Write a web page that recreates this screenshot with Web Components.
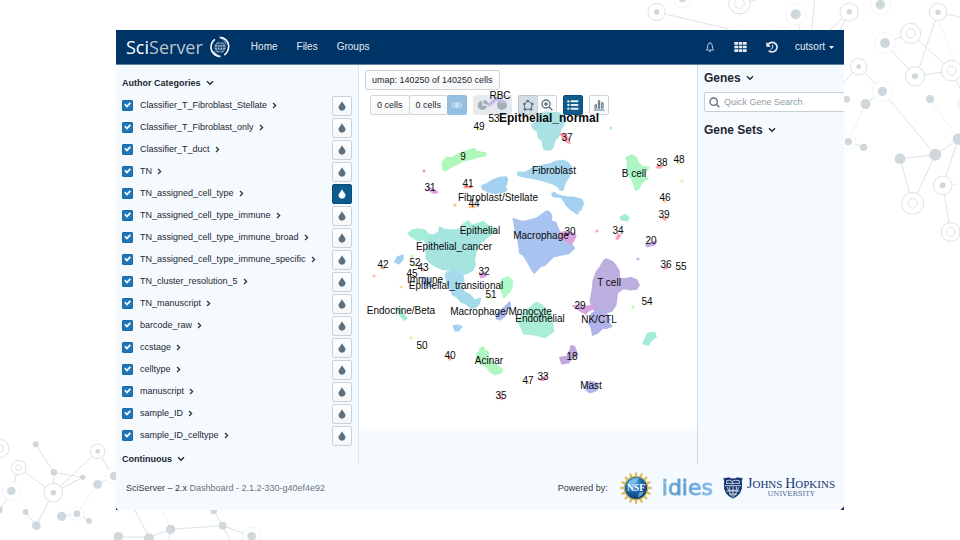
<!DOCTYPE html>
<html lang="en">
<head>
<meta charset="utf-8">
<meta name="viewport" content="width=device-width, initial-scale=1">
<title>SciServer Dashboard</title>
<style>
html, body { margin: 0; min-height: 100%; }
body { background: #fff; font-family: "Liberation Sans", Arial, sans-serif; font-size: 9px; line-height: 12px; color: #1c2733; }
</style>
</head>
<body>
<sci-slide>
  <sci-app>
    <sci-header slot="header"></sci-header>
    <category-panel slot="left"></category-panel>
    <umap-view slot="center"></umap-view>
    <gene-panel slot="right"></gene-panel>
    <sci-footer slot="footer"></sci-footer>
  </sci-app>
</sci-slide>
<script>
const define = (name, html, setup) => {
  const t = document.createElement('template');
  t.innerHTML = html;
  customElements.define(name, class extends HTMLElement {
    constructor() { super(); this.attachShadow({ mode: 'open' }).append(t.content.cloneNode(true)); }
    connectedCallback() { if (setup) setup(this, this.shadowRoot); }
  });
};

/* Decorative network drawing: c = dot, o = ring, d = dotted ring, l = line, s = dotted line */
const net = items => items.map(([k, a, b, c, d]) =>
  k === 'c' ? `<circle cx="${a}" cy="${b}" r="${c}" fill="#cfd8dc"/>` :
  k === 'o' ? `<circle cx="${a}" cy="${b}" r="${c}" fill="#fff" stroke="#dbe2e5" stroke-width="3"/>` :
  k === 'd' ? `<circle cx="${a}" cy="${b}" r="${c}" fill="#fff" stroke="#d6dee1" stroke-width="2" stroke-dasharray="3 3"/>` :
  `<path d="M${a} ${b}L${c} ${d}" stroke="#dce3e6" stroke-width="3"${k === 's' ? ' stroke-dasharray="3 4"' : ''}/>`).join('');
const topNet = net([
  ['l',80,36,300,88],['l',328,12,375,0],['l',554,0,545,90],['l',497,43,510,90],['l',657,36,600,90],['l',657,36,630,90],
  ['l',765,129,842,100],['l',765,129,855,229],['l',842,100,965,212],['l',924,36,868,202],['l',924,36,990,52],['s',924,60,975,185],
  ['l',855,229,965,212],['l',965,212,990,265],['l',686,200,640,248],['l',686,200,757,274],['l',757,274,707,312],['s',707,312,655,425],['l',655,425,701,442],
  ['l',757,274,916,464],['s',900,297,985,417],['l',985,417,916,464],['l',810,476,916,464],['l',810,476,848,610],['l',916,464,848,610],
  ['l',985,417,938,556],['l',938,556,962,696],['s',965,556,990,552],
  ['o',80,36,26],['c',80,36,8],['d',157,-4,26],['c',157,-4,11],['o',328,10,32],['o',328,10,15],['d',497,43,31],['c',497,43,15],['d',305,112,30],['d',452,110,30],
  ['o',657,36,27],['c',658,35,8],['d',751,14,30],['c',751,14,14],['o',924,36,26],['c',924,37,8],['d',765,129,31],['c',765,129,15],
  ['o',842,100,30],['o',842,100,14],['o',855,229,29],['c',855,229,9],['o',965,212,31],['o',965,212,14],['o',686,200,25],['c',686,200,7],
  ['d',757,274,30],['c',757,274,14],['c',707,312,15],['c',650,298,10],['d',655,425,23],['c',655,425,11],['c',701,442,11],['c',900,297,12],
  ['c',985,417,17],['c',810,476,16],['c',916,464,18],['o',938,556,28],['c',938,556,9],['o',848,610,33],['o',848,610,14],['o',962,696,28],['o',962,696,13],['o',1004,312,20]]);
const lowNet = net([
  ['l',107,73,162,157],['l',162,157,248,172],['l',162,157,160,218],['l',56,143,160,218],['l',56,143,34,213],['l',34,213,0,268],['l',248,172,160,218],
  ['l',293,94,160,218],['l',293,94,340,168],['l',340,168,293,193],['s',293,193,231,281],['l',185,289,231,281],['l',231,281,267,303],['l',160,218,109,317],['l',77,276,109,317],
  ['l',404,270,447,350],['s',487,270,512,328],['l',512,328,447,352],['l',512,328,505,370],['l',355,350,447,352],['l',512,328,668,317],['l',641,272,668,317],['l',668,317,695,370],['l',668,317,755,349],
  ['o',0,86,27],['o',0,86,11],['c',107,73,9],['c',162,157,10],['c',248,172,8],['o',56,143,22],['o',56,143,9],['d',34,213,27],['c',34,213,13],['c',-2,269,10],
  ['o',160,218,28],['c',160,218,8],['o',293,94,22],['c',293,94,7],['d',342,168,26],['c',342,168,13],['c',293,193,13],['d',231,281,20],['c',231,281,10],
  ['c',185,289,14],['c',267,303,9],['c',77,276,9],['c',109,317,13],['c',355,350,14],['c',447,355,15],['c',512,328,14],['c',641,272,10],['c',668,317,12],['d',755,349,27],['c',755,349,13]]);

define('sci-slide', `<style>
:host { display: block; position: relative; overflow: hidden; box-sizing: border-box; min-height: 100vh; padding: 30px 116px; }
svg { position: absolute; z-index: 0; }
.top { top: 0; right: 0; } .low { bottom: 0; left: 0; }
</style>
<svg class="top" width="330" height="250" viewBox="0 0 990 750" fill="none" aria-hidden="true">${topNet}</svg>
<svg class="low" width="265" height="120" viewBox="0 0 795 360" fill="none" aria-hidden="true">${lowNet}</svg>
<slot></slot>`);

define('sci-app', `<style>
:host { display: grid; position: relative; z-index: 1; min-height: calc(100vh - 60px); grid-template: auto 1fr auto / 243px minmax(0, 1fr) 147px; background: #f5faff; overflow: hidden; }
.wide { grid-column: 1 / -1; }
.side { display: grid; }
.l { border-right: 1px solid #d9e6f0; } .r { border-left: 1px solid #c9dbe8; }
::slotted(*) { min-width: 0; }
</style>
<div class="wide"><slot name="header"></slot></div>
<div class="side l"><slot name="left"></slot></div>
<div><slot name="center"></slot></div>
<div class="side r"><slot name="right"></slot></div>
<div class="wide"><slot name="footer"></slot></div>`);

define('sci-header', `<style>
:host { display: block; }
header { display: flex; align-items: center; height: 34px; padding: 0 10px; background: #003366; border-bottom: 1px solid #5d83a6; color: #e4ebf2; font-size: 10px; }
a { color: inherit; text-decoration: none; }
.logo { display: flex; align-items: center; gap: 6px; font: 18px/24px "Open Sans", "Noto Sans", sans-serif; color: #bcc4cd; }
.logo b { font-weight: 400; color: #fff; }
nav { display: flex; gap: 19px; margin-left: 20px; }
.tools { display: flex; align-items: center; gap: 17px; margin-left: auto; }
button { font: inherit; color: inherit; background: none; border: 0; padding: 0; display: flex; align-items: center; gap: 4px; }
svg { display: block; }
</style>
<header>
<a class="logo" href="#"><span><b>Sci</b>Server</span>
<svg width="22" height="22" viewBox="0 0 66 66" fill="none" aria-hidden="true"><circle cx="33" cy="34" r="17" fill="#8fa8bf"/><path d="M16 34h34M33 17v34M19 25h28M19 43h28M33 17q-17 17 0 34M33 17q17 17 0 34" stroke="#003366" stroke-width="2"/><path d="M32 4Q56 6 59 29Q60 46 46 57" stroke="#fff" stroke-width="5"/><path d="M32 4Q48 11 52 25" stroke="#9fb3c6" stroke-width="3"/><path d="M18 10Q5 19 6 37Q10 58 34 62" stroke="#fff" stroke-width="5"/><path d="M14 45Q19 55 34 62" stroke="#c5d2de" stroke-width="3"/></svg></a>
<nav><a href="#">Home</a><a href="#">Files</a><a href="#">Groups</a></nav>
<div class="tools">
<button aria-label="Notifications"><svg width="10" height="12" viewBox="0 0 30 36" fill="none" stroke="#d5dfe8" stroke-width="2.6"><path d="M15 3v3M4 27Q9 23 8 15Q9 6 15 6T22 15Q21 23 26 27ZM12 30q3 4 6 0"/></svg></button>
<button aria-label="Applications"><svg width="17" height="12" viewBox="0 0 51 36" fill="#e4ebf2"><path d="M7 3h11v8H7zM20 3h11v8H20zM33 3h11v8H33zM7 14h11v8H7zM20 14h11v8H20zM33 14h11v8H33zM7 25h11v8H7zM20 25h11v8H20zM33 25h11v8H33z"/></svg></button>
<button aria-label="History"><svg width="12" height="12" viewBox="0 0 36 36" fill="none" stroke="#e4ebf2" stroke-width="5"><path d="M6 10Q14 2 24 5Q34 9 33 20Q31 32 19 33Q12 33 8 29"/><path d="M1 3v14h14z" fill="#e4ebf2" stroke="none"/><path d="M20 11v10l-6 4" stroke-width="3"/></svg></button>
<button>cutsort<svg width="5" height="3" viewBox="0 0 5 3"><path d="M0 0h5L2.5 3z" fill="#e4ebf2"/></svg></button>
</div></header>`);

const chevR = '<svg width="5" height="7" viewBox="0 0 15 21" fill="none" stroke="#26323d" stroke-width="3.6" aria-hidden="true"><path d="M3 3l8 7.5L3 18"/></svg>';
const chevD = '<svg width="8" height="6" viewBox="0 0 24 18" fill="none" stroke="#1c2733" stroke-width="4" aria-hidden="true"><path d="M3 4l9 9 9-9"/></svg>';

define('section-title', `<style>
:host { display: block; }
button { display: flex; align-items: center; gap: 5px; width: 100%; padding: 0; border: 0; background: none; font: inherit; font-weight: 700; color: #1c2733; text-align: left; }
</style><button aria-expanded="true"><span><slot></slot></span>${chevD}</button>`);

define('category-row', `<style>
:host { display: flex; align-items: center; height: 22px; }
label { display: flex; align-items: center; gap: 7px; }
input { appearance: none; width: 11px; height: 11px; margin: 0; border-radius: 2px; background: #1f77b8; box-shadow: inset 0 0 0 1px #1a69a4; display: grid; }
input:checked::before { content: ""; background: #fff; clip-path: polygon(20% 48%, 32% 38%, 44% 53%, 70% 26%, 82% 37%, 45% 74%); }
button { display: grid; place-items: center; padding: 0; border: 0; background: none; }
.open { width: 5px; height: 12px; margin-left: 5px; }
.tint { width: 20px; height: 20px; margin-left: auto; margin-top: 2px; border-radius: 2px; background: linear-gradient(#fff, #f4f6f8); border: 1px solid #c9d3da; color: #5c7080; }
:host([active]) .tint { background: #0e5a8a; border-color: #0b4d78; color: #fff; }
</style>
<label><input type="checkbox" checked><slot></slot></label>
<button class="open" aria-label="Expand">${chevR}</button>
<button class="tint" aria-label="Color by category"><svg width="8" height="10" viewBox="0 0 24 30"><path d="M12 1Q15 7 20 13Q24 17 22 22Q20 29 12 29T2 22Q0 17 4 13Q9 7 12 1Z" fill="currentColor"/></svg></button>`);

define('category-panel', `<style>
:host { display: block; padding: 12px 6px 0; }
.list { padding-top: 5px; }
.end { padding-top: 7px; }
</style>
<section-title>Author Categories</section-title><div class="list"></div><section-title class="end">Continuous</section-title>`,
(host, root) => {
  const list = root.querySelector('.list');
  if (list.childElementCount) return;
  for (const n of ['Classifier_T_Fibroblast_Stellate', 'Classifier_T_Fibroblast_only', 'Classifier_T_duct', 'TN', 'TN_assigned_cell_type', 'TN_assigned_cell_type_immune', 'TN_assigned_cell_type_immune_broad', 'TN_assigned_cell_type_immune_specific', 'TN_cluster_resolution_5', 'TN_manuscript', 'barcode_raw', 'ccstage', 'celltype', 'manuscript', 'sample_ID', 'sample_ID_celltype']) {
    const r = document.createElement('category-row');
    r.textContent = n;
    if (n === 'TN_assigned_cell_type') r.setAttribute('active', '');
    list.append(r);
  }
});

define('gene-panel', `<style>
:host { display: block; padding: 5px 0 0 6px; overflow: hidden; }
section-title { font-size: 12px; line-height: 16px; }
.search { display: flex; align-items: center; gap: 4px; height: 18px; margin: 6px -8px 10px 0; padding-left: 4px; background: #fff; border: 1px solid #c6d2da; border-radius: 2px; }
svg { flex: none; }
input { flex: 1; min-width: 0; border: 0; padding: 0; background: none; font: inherit; outline: 0; }
input::placeholder { color: #8f9ca7; opacity: 1; }
</style>
<section-title>Genes</section-title>
<div class="search"><svg width="11" height="11" viewBox="0 0 33 33" fill="none" stroke="#5c7080" stroke-width="4" aria-hidden="true"><circle cx="14" cy="14" r="11"/><path d="M22 22l9 9"/></svg><input type="search" aria-label="Quick Gene Search" placeholder="Quick Gene Search"></div>
<section-title>Gene Sets</section-title>`);

/* Each cluster group: origin in plot units, then [fill, outline points] at three points per unit */
const clusters = [
 [355,60,[
  ['#c6bdea','398 134 425 112 440 120 452 128 440 127 425 121 402 138'],
  ['#b0f7ba','262 308 268 300 275 292 290 294 300 288 310 282 330 275 350 268 358 266 364 274 392 280 392 287 369 291 350 297 325 302 312 310 290 320 272 332 264 329'],
  ['#dea0dc','220 383 235 388 248 397 236 399 222 390'],['#ff9f86','328 378 350 380 348 383 328 382'],['#ffc285','343 440 360 438 360 442 344 442'],
  ['#a4d0f1','380 378 395 372 410 362 432 353 454 351 457 358 455 368 450 382 455 388 450 394 420 400 400 395 384 388']]],
 [525,60,[
  ['#a6d5ee','-22 337 0 338 20 326 45 318 75 312 95 304 115 302 128 308 138 320 138 335 132 350 124 362 118 375 113 390 106 390 100 380 85 372 60 364 40 358 10 352 -8 350 -20 346'],
  ['#a8e2e4','20 194 33 188 42 168 60 157 105 160 120 172 118 190 108 206 100 230 90 240 84 262 75 269 58 268 54 258 52 242 40 232 38 215 24 204'],
  ['#ff9fb6','106 222 118 222 130 235 135 250 120 243'],
  ['#adf6c4','303 293 320 285 332 292 340 308 352 320 372 322 366 330 355 342 368 356 357 361 348 372 342 385 332 391 328 375 322 360 312 345 306 325 308 305'],
  ['#ff9fa6','395 322 402 318 413 319 405 324'],
  ['#a4d0f1','81 401 88 398 94 404 110 408 125 411 145 412 170 419 175 430 167 450 159 454 158 461 149 456 137 448 124 435 114 418 106 411 90 410 83 408']]],
 [355,205,[
  ['#a6edd8','160 86 170 77 190 72 210 76 218 86 235 92 252 88 330 70 322 60 340 48 350 62 365 57 385 50 400 64 418 70 423 80 400 93 385 108 340 120 250 120 215 115 205 103 188 106 172 96'],
  ['#a6e5df','254 67 270 74 300 76 320 72 345 80 370 78 388 95 372 118 363 140 358 165 360 180 353 195 340 203 320 210 300 203 280 193 262 193 240 183 225 173 214 160 214 140 217 115 225 95 252 82'],
  ['#a5daec','275 202 300 197 323 212 326 225 318 240 328 262 345 270 360 287 376 280 373 295 363 305 350 310 335 298 318 290 308 278 292 268 287 250 277 235 272 215'],
  ['#a2cef1','120 170 128 156 144 151 143 164 131 176'],['#a9bff0','205 218 225 222 222 236 238 243 215 246 205 232'],
  ['#dca2da','374 207 390 202 393 213 378 218'],['#b0f7c6','441 223 460 216 472 230 470 246 465 260 454 269 447 278 442 263 434 245'],
  ['#a4ecd4','122 307 135 313 155 340 148 345 134 329'],['#adbcee','464 291 466 301 455 316 449 334 435 344 425 341 428 325 444 311'],
  ['#a4d0f1','295 363 308 361 320 365 311 377 301 377']]],
 [525,205,[
  ['#a9c3f1','-35 41 -15 48 0 50 15 45 35 40 55 25 62 20 72 20 80 32 78 49 92 53 98 69 108 86 122 106 142 121 148 130 131 145 108 150 85 155 75 165 60 180 45 185 28 204 18 190 5 165 -5 150 -15 145 -20 110 -28 80'],
  ['#d9a4dc','102 85 120 80 150 86 152 95 139 118 125 109 106 98'],['#ff9fc8','280 87 286 92 279 102 274 102'],['#a4edda','286 37 300 29 312 38 307 47 289 44'],
  ['#ffa49c','410 37 425 40 420 45'],['#c3a7e2','363 118 394 109 389 119 366 124'],['#ff9fb6','417 190 428 184 425 191'],
  ['#bcafe0','244 162 262 170 272 181 282 198 283 220 300 222 318 218 335 225 342 240 335 252 318 254 295 250 277 263 275 280 272 300 260 318 240 325 214 325 205 310 196 290 203 250 205 227 215 200 226 185 236 168'],
  ['#d5a3de','144 303 165 300 175 305 204 302 204 311 190 318 182 326 165 317'],
  ['#b1b2e9','200 327 210 320 240 320 254 344 248 350 260 364 245 370 235 368 216 385 203 390 200 370 192 355'],
  ['#aaeed6','34 292 50 300 61 315 76 325 82 345 85 379 60 397 30 389 -3 386 -10 370 -20 350 -10 330 10 312 20 305']]],
 [355,320,[
  ['#ffa196','280 110 290 112 285 120'],['#b0f7c0','366 100 374 95 376 84 384 81 389 91 400 96 399 110 411 125 430 140 443 149 438 158 420 163 405 155 395 140 378 132 364 122'],
  ['#bfa8de','615 113 635 110 646 90 648 78 658 80 668 105 651 115 640 128 621 131'],['#ee9fca','557 180 576 164 571 175 565 181'],
  ['#b0b7f0','690 200 705 185 728 191 725 211 705 218 695 211'],['#ff9fbf','432 222 443 238 438 238'],['#a4edda','878 41 899 38 903 50 885 66 880 75 864 71 870 58']]]
];
const dots = [[424,171,'#dda0dd'],[455,205,'#ffc080'],[479,129,'#dcf79a'],[494,121,'#b8f79a'],[611,128,'#a8f2c8'],[679,163,'#dcf79a'],[682,181,'#dff09a'],[665,201,'#ffd080'],
 [374,276,'#ffc0a0'],[383,268,'#ffb090'],[401,287,'#ffd890'],[412,256,'#c8f79a'],[414,265,'#c8f79a'],[423,270,'#ffb090'],[412,276,'#ffd090'],[491,297,'#c8f79a'],
 [597,231,'#ff9fc8'],[638,259,'#cdb0e6'],[633,307,'#baff9f'],[647,304,'#baff9f'],[680,269,'#a9f7a9'],[411,338,'#dcf79a'],[422,348,'#e5f79a'],[528,383,'#f5e58a']];
const labels = [['RBC',500,95],['53',494,118],['49',479,126],['37',567,137],['9',463,156],['Fibroblast',554,170],['B cell',634,173],['38',662,162],['48',679,159],['31',430,187],['41',468,183],
 ['Fibroblast/Stellate',498,197],['44',474,203],['46',665,197],['39',664,214],['Epithelial',480,230],['Epithelial_cancer',454,246],['Macrophage',541,235],['30',570,231],['34',618,230],['20',651,240],
 ['42',383,264],['52',415,262],['43',423,267],['45',412,273],['Immune',425,279],['32',484,271],['Epithelial_transitional',456,285],['51',491,294],['T cell',609,282],['36',666,264],['55',681,266],['54',647,301],
 ['Endocrine/Beta',401,310],['Macrophage/Monocyte',501,311],['Endothelial',540,318],['29',580,305],['NK/CTL',599,319],['50',422,345],['40',450,355],['Acinar',489,360],['18',572,356],['47',528,380],['33',543,376],['35',501,395],['Mast',591,385]];
const plot = clusters.map(([x, y, s]) => `<g transform="translate(${x} ${y}) scale(.3333)">${s.map(([f, p]) => `<polygon points="${p}" fill="${f}" stroke="${f}"/>`).join('')}</g>`).join('')
 + dots.map(([x, y, f]) => `<circle cx="${x}" cy="${y}" r="1.6" fill="${f}"/>`).join('')
 + labels.map(([t, x, y]) => `<text x="${x}" y="${y + 4}">${t}</text>`).join('')
 + '<text class="main" x="549" y="122">Epithelial_normal</text>';

define('umap-view', `<style>
:host { display: grid; background: #fff; }
:host > * { grid-area: 1 / 1; }
.plot { display: block; width: 100%; height: auto; pointer-events: none; z-index: 1; grid-area: 1 / 1; }
polygon { stroke-width: 5; stroke-linejoin: round; }
text { font: 10px "Liberation Sans", Arial, sans-serif; text-anchor: middle; fill: #080808; }
.main { font-size: 12px; font-weight: 700; }
.bar { grid-area: 1 / 1; display: flex; flex-direction: column; align-items: flex-start; gap: 5px; padding: 5px 6px; }
.row { display: flex; gap: 6px; padding-left: 5px; }
.group { display: flex; }
button { height: 20px; min-width: 20px; padding: 0 6px; border: 1px solid #ced6dc; border-radius: 2px; background: linear-gradient(#fff, #f6f8f9); font: inherit; color: #1c2733; display: grid; place-items: center; }
.group button + button { margin-left: -1px; }
.icon { padding: 0; color: #5c7080; }
.blue { background: #94bfe1; border-color: #94bfe1; color: #d8eaf7; }
.off { background: #e6eaee; border-color: #e6eaee; color: #a3afb9; }
.on { background: #d5dde4; border-color: #b9c5ce; }
.dark { background: #0e5a8a; border-color: #0b4d78; color: #e6f0f6; }
</style>
<div class="bar">
<button>umap: 140250 of 140250 cells</button>
<div class="row">
<div class="group"><button>0 cells</button><button>0 cells</button><button class="icon blue" aria-label="Differential expression"><svg width="12" height="10" viewBox="0 0 36 30" fill="none" stroke="currentColor" stroke-width="3"><path d="M9 6Q0 15 9 24M27 6q9 9 0 18M16 7q-8 8 0 16zM20 7q8 8 0 16z"/></svg></button></div>
<div class="group"><button class="icon off" aria-label="Subset"><svg width="12" height="12" viewBox="0 0 36 36" fill="currentColor"><path d="M16 5v15h14A14 14 0 1 1 16 5ZM20 2Q33 3 34 16H20Z"/></svg></button><button class="icon off" aria-label="Undo subset"><svg width="12" height="12" viewBox="0 0 36 36" fill="currentColor"><circle cx="18" cy="18" r="15"/></svg></button></div>
<div class="group"><button class="icon on" aria-label="Lasso"><svg width="12" height="12" viewBox="0 0 36 36" fill="none" stroke="currentColor" stroke-width="3"><path d="M17 6L31 15L27 31H9L7 16Z"/><g fill="currentColor" stroke="none"><circle cx="17" cy="6" r="4"/><circle cx="31" cy="15" r="4"/><circle cx="27" cy="31" r="4"/><circle cx="9" cy="31" r="4"/><circle cx="7" cy="15" r="4"/></g></svg></button><button class="icon" aria-label="Zoom"><svg width="12" height="12" viewBox="0 0 36 36" fill="none" stroke="currentColor" stroke-width="4"><circle cx="15" cy="15" r="12"/><path d="M24 24l10 10M15 9v12M9 15h12"/></svg></button></div>
<button class="icon dark" aria-label="Show labels"><svg width="12" height="12" viewBox="0 0 36 36" fill="currentColor"><path d="M11 4h23v6H11zM11 15h23v6H11zM11 26h23v6H11z"/><circle cx="4" cy="7" r="3.5"/><circle cx="4" cy="18" r="3.5"/><circle cx="4" cy="29" r="3.5"/></svg></button>
<button class="icon" aria-label="Histogram"><svg width="12" height="12" viewBox="0 0 36 36" fill="none" stroke="currentColor" stroke-width="3"><path d="M2 33h32M6 17h4v11H6zM16 5h4v23h-4zM26 11h4v17h-4z"/></svg></button>
</div></div>
<svg class="plot" viewBox="359 65 338 366" role="img" aria-label="UMAP of cell types">${plot}</svg>`);

define('sci-footer', `<style>
:host { display: block; }
footer { display: flex; align-items: center; justify-content: space-between; gap: 10px; height: 45px; padding: 0 9px 0 10px; color: #6b747c; background: linear-gradient(45deg, #3a1468 1px, transparent 2px), linear-gradient(-45deg, #3a1468 2px, transparent 3px); }
footer b { font-weight: 400; color: #333b42; }
.by { display: flex; align-items: center; gap: 12px; color: #333b42; }
.logos { display: flex; align-items: center; gap: 10px; }
a { display: flex; align-items: center; text-decoration: none; }
svg { display: block; }
.jhu { gap: 4px; font-family: "Liberation Serif", serif; color: #16356f; }
.mark { display: flex; flex-direction: column; align-items: center; }
.mark .n { font-size: 11px; line-height: 12px; white-space: nowrap; }
.mark i { font-style: normal; font-size: 14px; }
.mark .u { font: 7px/8px "DejaVu Serif", serif; color: #51698f; }
.idies { font: 22px/24px "DejaVu Sans", sans-serif; }
.idies span { background: linear-gradient(90deg, #7fb2d6, #5f9fcc 35%, #8bbcf0); -webkit-background-clip: text; background-clip: text; color: transparent; -webkit-text-stroke: 1px transparent; }
</style>
<footer><span><b>SciServer – 2.x</b> Dashboard - 2.1.2-330-g40ef4e92</span>
<div class="by">Powered by:
<div class="logos">
<a href="#" aria-label="National Science Foundation"><svg width="32" height="32" viewBox="0 0 96 96">
<defs><radialGradient id="g" cx=".4" cy=".3" r=".8"><stop offset="0" stop-color="#65b6ed"/><stop offset=".5" stop-color="#1765ac"/><stop offset="1" stop-color="#072f60"/></radialGradient></defs>
<g id="s" stroke="#d5ac3f" stroke-width="5" fill="#d5ac3f"></g>
<circle cx="48" cy="48" r="37" fill="#d8b247"/><circle cx="48" cy="48" r="33" fill="url(#g)"/>
<path d="M24 32q15-18 34-13l-9 12-13 3-4 10zM57 62l14-4q-3 15-17 18z" fill="#a0d7ef" opacity=".6"/>
<text x="48" y="58" text-anchor="middle" font-family="Liberation Serif, serif" font-weight="700" font-size="29" fill="#fff">NSF</text></svg></a>
<a class="idies" href="#"><span>idies</span></a>
<a class="jhu" href="#"><svg width="20" height="22" viewBox="0 0 60 66"><path d="M1 2Q9 5 16 1Q30 8 44 1Q51 5 59 2Q55 11 57 21Q60 51 30 65Q0 51 3 21Q5 11 1 2Z" fill="#16356f"/><g fill="none" stroke="#e7eff7" stroke-width="2.5"><path d="M6 26H54M11 11q9-4 17 2q8-6 21-2v9q-13-4-21 1q-8-5-17-1zM28 13v8M12 30L26 58M48 30L34 58M20 28v12h20V28M10 42H50M30 28v36M18 51h24"/></g></svg>
<span class="mark"><span class="n"><i>J</i>OHNS <i>H</i>OPKINS</span><span class="u">UNIVERSITY</span></span></a>
</div></div></footer>`,
(host, root) => {
  let p = '';
  for (let i = 0; i < 16; i++) p += `<g transform="rotate(${i * 22.5} 48 48)"><path d="M48 14V6"/><circle cx="48" cy="4" r="1"/></g>`;
  root.querySelector('#s').innerHTML = p;
});
</script>
</body>
</html>
